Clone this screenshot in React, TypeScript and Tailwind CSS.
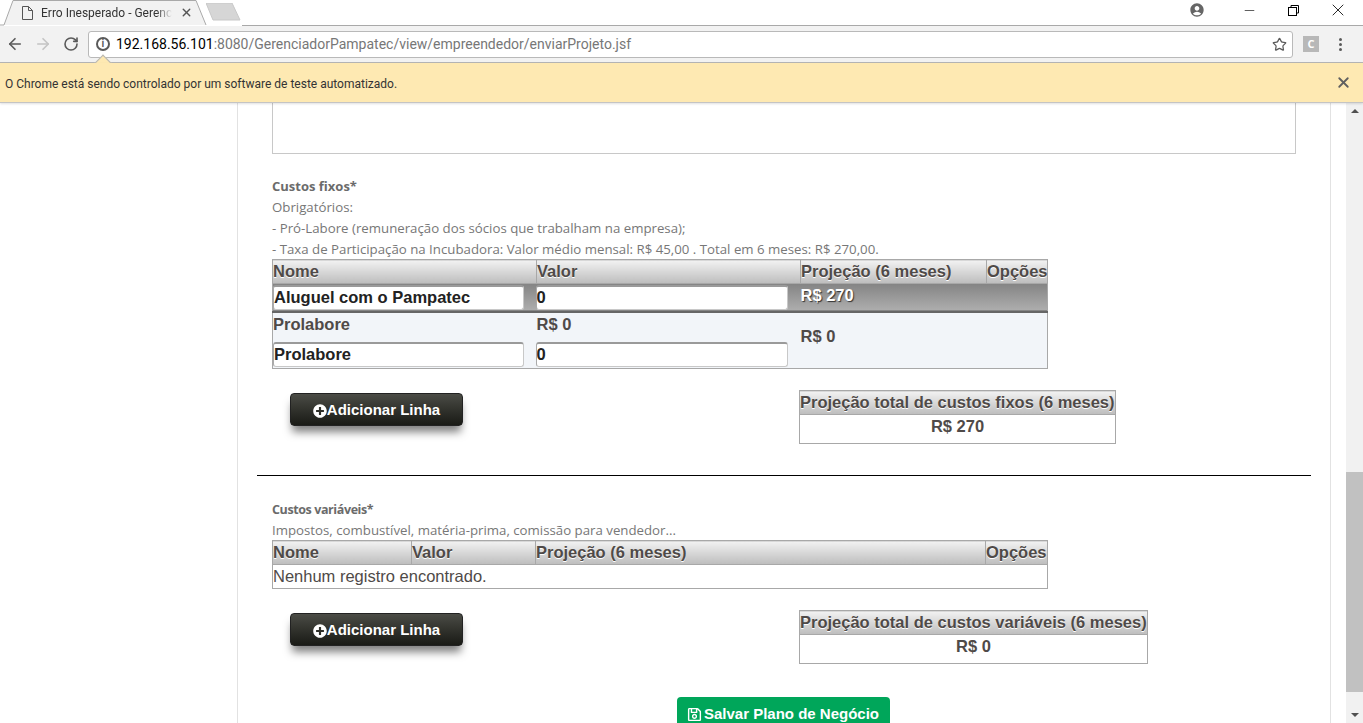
import {ArrowLeft, ArrowRight, RotateCw, Star, X, Minus} from 'lucide-react'
import {FaPlusCircle, FaRegSave} from 'react-icons/fa'
import {MdAccountCircle} from 'react-icons/md'

const thClass = "border border-[#a8a8a8] bg-gradient-to-b from-[#f2f2f2] to-[#bdbdbd] text-left font-bold px-0 h-6 [text-shadow:0_1px_0_#fff]"
const inputClass = "block h-[25px] bg-white border border-[#c8c8c8] border-l-[#aaa] border-t-2 border-t-[#9a9a9a] rounded-[3px] px-0 text-[16.5px] font-bold text-[#222] outline-none"

function TableHead({cols}: {cols: {name: string, width: string}[]}){
    return(
        <thead>
            <tr>
                {cols.map(c => <th key={c.name} className={thClass + " " + c.width}>{c.name}</th>)}
            </tr>
        </thead>
    )
}

function AddButton(){
    return(
        <button className="ml-[18px] mt-[3px] w-[173px] h-[33px] pt-[2px] rounded-[4px] border border-[#222] bg-gradient-to-b from-[#4b4c46] to-[#1a1b16] text-white text-[15px] font-bold flex items-center justify-center shadow-[0_8px_8px_-2px_rgba(0,0,0,0.5)]">
            <FaPlusCircle size={14}/>Adicionar Linha
        </button>
    )
}

function TotalBox({title, value, width}: {title: string, value: string, width: string}){
    return(
        <table className={"border-collapse table-fixed text-[16.5px] leading-[19px] text-[#4f4a48] " + width}>
            <tbody>
                <tr><th className={thClass + " whitespace-nowrap"}>{title}</th></tr>
                <tr><td className="border border-[#a8a8a8] h-[29px] pb-[6px] text-center font-bold">{value}</td></tr>
            </tbody>
        </table>
    )
}

function Browser(){
    return(
        <div className="h-[103px] shrink-0 font-['Open_Sans',sans-serif]">
            <div className="h-[26px] flex items-end relative bg-white">
                <div className="relative w-[208px] h-[26px] ml-0 shrink-0">
                    <svg className="absolute inset-0" width="208" height="26" viewBox="0 0 208 26">
                        <path d="M0 25 L4 25 L13 0.5 L196 0.5 L206 25" fill="#f2f2f2" stroke="#a9a9a9"/>
                        <path d="M22.5 6.5h6l4 4v9h-10z M28.5 6.5v4h4" fill="none" stroke="#555" strokeWidth="1"/>
                    </svg>
                    <span className="absolute left-[41px] top-[4px] whitespace-nowrap text-[12px] text-[#333] font-['Roboto',sans-serif] [mask-image:linear-gradient(to_right,#000_88%,transparent)]">Erro Inesperado - Gerenc</span>
                    <X className="absolute left-[180px] top-[6px] text-[#555]" size={13} strokeWidth={2.5}/>
                </div>
                <svg className="-ml-[2px] mb-[5px]" width="36" height="18" viewBox="0 0 36 18">
                    <path d="M0 0 H26 L34 17 H7 Z" fill="#d6d6d6" stroke="#c8c8c8"/>
                </svg>
                <div className="flex-1 h-px bg-[#a9a9a9]"></div>
                <div className="absolute right-0 top-0 h-5 flex items-center">
                    <MdAccountCircle className="mr-[37px] text-[#666]" size={16}/>
                    <Minus className="mr-[31px] text-black" size={15} strokeWidth={1}/>
                    <svg className="mr-[29px]" width="11" height="11" viewBox="0 0 11 11" fill="none" stroke="#000">
                        <rect x="0.5" y="2.5" width="8" height="8"/><path d="M3 2.5V0.5H10.5V8H8.5"/>
                    </svg>
                    <X className="mr-[15px] text-black" size={20} strokeWidth={1}/>
                </div>
            </div>
            <div className="h-[37px] bg-[#f2f2f2] flex items-center border-b border-[#b5b5b5] relative">
                <ArrowLeft className="ml-[6px] text-[#5a5a5a]" size={18} strokeWidth={2.2}/>
                <ArrowRight className="ml-[10px] text-[#c4c4c4]" size={18} strokeWidth={2.2}/>
                <RotateCw className="ml-[11px] text-[#5a5a5a]" size={16} strokeWidth={2.4}/>
                <div className="ml-[9px] w-[1205px] h-[27px] bg-white border border-[#b9b9b9] rounded-[3px] flex items-center pl-[7px]">
                    <div className="w-[14px] h-[14px] rounded-full border-2 border-[#5a5a5a] text-[10px] leading-[10px] font-bold text-[#5a5a5a] text-center font-['Liberation_Sans',sans-serif] shrink-0">i</div>
                    <span className="ml-[6px] text-[14px] font-['Roboto',sans-serif] text-black">192.168.56.101<span className="text-[#777]">:8080/GerenciadorPampatec/view/empreendedor/enviarProjeto.jsf</span></span>
                    <Star className="ml-auto mr-[5px] text-[#5a5a5a]" size={15} strokeWidth={2}/>
                </div>
                <div className="ml-[10px] w-4 h-4 bg-[#b8b8b8] text-white text-[11px] leading-4 text-center font-bold">C</div>
                <div className="ml-[20px] flex flex-col gap-[2px]">
                    <div className="w-[3px] h-[3px] rounded-full bg-[#5a5a5a]"></div>
                    <div className="w-[3px] h-[3px] rounded-full bg-[#5a5a5a]"></div>
                    <div className="w-[3px] h-[3px] rounded-full bg-[#5a5a5a]"></div>
                </div>
                <div className="absolute left-[97px] top-[31px] w-[12px] h-[12px] rotate-45 bg-[#fee9b2] border-l border-t border-[#b5b5b5]"></div>
            </div>
            <div className="relative h-10 pt-[2px] bg-[#fee9b2] border-b border-[#c4c4c4] shadow-[0_1px_2px_rgba(0,0,0,0.12)] flex items-center pl-[5px] text-[12px] text-[#333] font-['Roboto',sans-serif]">
                O Chrome está sendo controlado por um software de teste automatizado.
                <X className="ml-auto mr-[11px] -mt-[2px] text-[#5f5f5f]" size={17} strokeWidth={2.6}/>
            </div>
        </div>
    )
}

function Scrollbar(){
    return(
        <div className="w-[17px] shrink-0 bg-[#f1f1f1] flex flex-col items-center">
            <div className="mt-[6px] w-0 h-0 border-x-[4px] border-x-transparent border-b-[4px] border-b-[#505050]"></div>
            <div className="mt-[359px] w-full h-[220px] bg-[#c1c1c1]"></div>
            <div className="mt-[21px] w-0 h-0 border-x-[4px] border-x-transparent border-t-[4px] border-t-[#505050]"></div>
        </div>
    )
}

export default function App(){
    return(
        <div className="w-[1363px] h-[723px] overflow-hidden flex flex-col bg-white">
            <Browser/>
            <div className="flex flex-1 min-h-0">
                <div className="w-[237px] shrink-0"></div>
                <div className="w-[1094px] shrink-0 border-x border-[#e2e2e2] overflow-hidden font-['Liberation_Sans',sans-serif] text-[#4f4a48]">
                    <div className="px-[34px]">
                        <div className="w-[1024px] h-[51px] border-x border-b border-[#c8c8c8]"></div>

                        <div className="mt-[22px] -mb-px text-[13.25px] leading-[21px] text-[#777] font-['Open_Sans',sans-serif]">
                            <div className="text-[13px] font-bold text-[#6b6b6b]">Custos fixos*</div>
                            <div>Obrigatórios:</div>
                            <div>- Pró-Labore (remuneração dos sócios que trabalham na empresa);</div>
                            <div>- Taxa de Participação na Incubadora: Valor médio mensal: R$ 45,00 . Total em 6 meses: R$ 270,00.</div>
                        </div>

                        <table className="border-collapse table-fixed w-[775px] text-[16.5px] leading-[19px] border border-[#a8a8a8]">
                            <TableHead cols={[
                                {name: 'Nome', width: 'w-[264px]'},
                                {name: 'Valor', width: 'w-[264px]'},
                                {name: 'Projeção (6 meses)', width: 'w-[186px]'},
                                {name: 'Opções', width: 'w-[61px]'},
                            ]}/>
                            <tbody>
                                <tr className="h-[28px] bg-gradient-to-b from-[#858585] to-[#adadad] border-b-2 border-b-[#666]">
                                    <td className="p-0"><input readOnly defaultValue="Aluguel com o Pampatec" className={inputClass + " w-[251px]"}/></td>
                                    <td className="p-0"><input readOnly defaultValue="0" className={inputClass + " w-[252px] -ml-px"}/></td>
                                    <td colSpan={2} className="px-0 pb-1 font-bold text-white [text-shadow:1px_1px_1px_#333]">R$ 270</td>
                                </tr>
                                <tr className="h-[57px] bg-[#f2f5f9]">
                                    <td className="p-0 align-top font-bold">
                                        <div className="h-[21px] mt-px mb-[7px] flex items-center">Prolabore</div>
                                        <input readOnly defaultValue="Prolabore" className={inputClass + " w-[251px]"}/>
                                    </td>
                                    <td className="p-0 align-top font-bold">
                                        <div className="h-[21px] mt-px mb-[7px] flex items-center">R$ 0</div>
                                        <input readOnly defaultValue="0" className={inputClass + " w-[252px] -ml-px"}/>
                                    </td>
                                    <td colSpan={2} className="px-0 pb-2 font-bold">R$ 0</td>
                                </tr>
                            </tbody>
                        </table>

                        <div className="mt-[21px] grid grid-cols-[527px_auto]">
                            <AddButton/>
                            <TotalBox title="Projeção total de custos fixos (6 meses)" value="R$ 270" width="w-[317px]"/>
                        </div>

                        <div className="mt-[31px] -mx-[15px] h-px bg-black"></div>

                        <div className="mt-[23px] -mb-px text-[13.25px] leading-[21px] text-[#777] font-['Open_Sans',sans-serif]">
                            <div className="text-[12.5px] tracking-[-0.4px] font-bold text-[#6b6b6b]">Custos variáveis*</div>
                            <div>Impostos, combustível, matéria-prima, comissão para vendedor...</div>
                        </div>

                        <table className="border-collapse table-fixed w-[775px] text-[16.5px] leading-[19px] border border-[#a8a8a8]">
                            <TableHead cols={[
                                {name: 'Nome', width: 'w-[139px]'},
                                {name: 'Valor', width: 'w-[124px]'},
                                {name: 'Projeção (6 meses)', width: 'w-[450px]'},
                                {name: 'Opções', width: 'w-[62px]'},
                            ]}/>
                            <tbody>
                                <tr><td colSpan={4} className="h-6 px-0">Nenhum registro encontrado.</td></tr>
                            </tbody>
                        </table>

                        <div className="mt-[21px] grid grid-cols-[527px_auto]">
                            <AddButton/>
                            <TotalBox title="Projeção total de custos variáveis (6 meses)" value="R$ 0" width="w-[349px]"/>
                        </div>

                        <div className="mt-[33px] flex justify-center">
                            <button className="w-[213px] h-[26px] -ml-[2px] rounded-t-[4px] bg-[#00a65a] text-white text-[15px] leading-4 font-bold flex items-start pt-[9px] justify-center gap-[2px]">
                                <FaRegSave className="mt-px" size={15}/>Salvar Plano de Negócio
                            </button>
                        </div>
                    </div>
                </div>
                <div className="w-[15px] shrink-0"></div>
                <Scrollbar/>
            </div>
        </div>
    )
}
